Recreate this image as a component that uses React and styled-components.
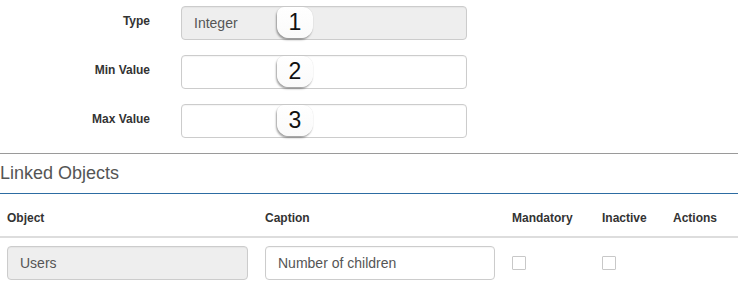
import React from 'react'
import styled, { createGlobalStyle } from 'styled-components'

const GlobalStyle = createGlobalStyle`
  body {
    margin: 0;
    background: #fff;
    font-family: 'Liberation Sans', Arial, sans-serif;
    color: #333;
  }
`

const Page = styled.div`
  width: 738px;
  padding-top: 6px;
`

const FormRow = styled.div`
  display: flex;
  margin-bottom: 15px;
`

const Label = styled.label`
  width: 150px;
  text-align: right;
  font-size: 12px;
  font-weight: bold;
  line-height: 17px;
  padding-top: 7px;
  color: #333;
`

const Field = styled.div`
  position: relative;
  margin-left: 31px;
  width: 286px;
`

const Input = styled.div`
  box-sizing: border-box;
  height: ${p => p.$h || 34}px;
  width: 100%;
  border: 1px solid #ccc;
  border-radius: 4px;
  background: ${p => (p.$readonly ? '#eee' : '#fff')};
  padding: 0 12px;
  font-size: 14px;
  line-height: ${p => (p.$h || 34) - 2}px;
  color: #555;
  box-shadow: inset 0 1px 1px rgba(0, 0, 0, 0.04);
`

const Badge = styled.div`
  position: absolute;
  left: 96px;
  top: 1px;
  width: 36px;
  height: 31px;
  box-sizing: border-box;
  background: linear-gradient(#fff, #fafafa);
  border-radius: 7px 10px 12px 12px;
  box-shadow: -1px 2px 2px rgba(0, 0, 0, 0.35), 0 0 1px rgba(0, 0, 0, 0.2);
  font-family: 'Liberation Sans', Arial, sans-serif;
  font-size: 23px;
  line-height: 31px;
  text-align: center;
  color: #111;
`

const Rule = styled.hr`
  margin: 0;
  border: 0;
  border-top: 1px solid #9a9a9a;
`

const Legend = styled.div`
  margin-top: 8px;
  font-size: 18px;
  line-height: 22px;
  color: #555;
  padding-bottom: 9px;
  border-bottom: 1px solid #2d6ca2;
`

const Grid = styled.div`
  display: grid;
  grid-template-columns: 257px 247px 90px 71px 1fr;
`

const HeadCell = styled.div`
  padding: 16px 9px 9px 8px;
  font-size: 12px;
  font-weight: bold;
  line-height: 17px;
  color: #333;
  border-bottom: 2px solid #ddd;
  &:first-child {
    padding-left: 7px;
  }
`

const Cell = styled.div`
  padding: 8px 9px 8px ${p => (p.$first ? 7 : 8)}px;
  display: flex;
  align-items: center;
`

const Check = styled.span`
  display: block;
  width: 14px;
  height: 14px;
  box-sizing: border-box;
  border: 1px solid #c8c8c8;
  border-radius: 1px;
  background: #fff;
`

const fields = [
  { label: 'Type', value: 'Integer', readonly: true, n: 1 },
  { label: 'Min Value', value: '', n: 2 },
  { label: 'Max Value', value: '', n: 3 },
]

export default function App() {
  return (
    <Page>
      <GlobalStyle />
      {fields.map(f => (
        <FormRow key={f.n}>
          <Label>{f.label}</Label>
          <Field>
            <Input $readonly={f.readonly}>{f.value}</Input>
            <Badge>{f.n}</Badge>
          </Field>
        </FormRow>
      ))}
      <Rule />
      <Legend>Linked Objects</Legend>
      <Grid>
        <HeadCell>Object</HeadCell>
        <HeadCell>Caption</HeadCell>
        <HeadCell>Mandatory</HeadCell>
        <HeadCell>Inactive</HeadCell>
        <HeadCell>Actions</HeadCell>
        <Cell $first>
          <Input $readonly $h={34}>Users</Input>
        </Cell>
        <Cell>
          <Input $h={34}>Number of children</Input>
        </Cell>
        <Cell>
          <Check />
        </Cell>
        <Cell>
          <Check />
        </Cell>
        <Cell />
      </Grid>
    </Page>
  )
}
